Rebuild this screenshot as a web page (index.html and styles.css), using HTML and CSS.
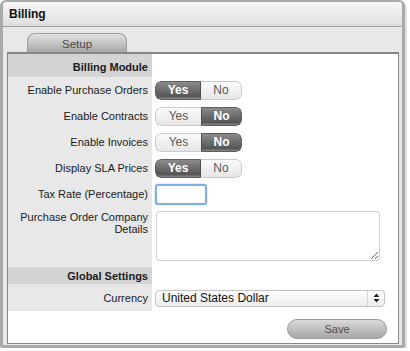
FILE: index.html
```html
<!DOCTYPE html>
<html lang="en">
<head>
  <meta charset="UTF-8">
  <meta name="viewport" content="width=device-width, initial-scale=1.0">
  <title>Billing</title>
  <link rel="stylesheet" href="styles.css">
</head>
<body>
  <div class="window">
    <div class="titlebar">Billing</div>
    <div class="window-body">
      <div class="tabs">
        <div class="tab">Setup</div>
      </div>
      <div class="panel">
        <div class="form">
          <!-- Billing Module -->
          <div class="label head head-first">Billing Module</div>
          <div class="field"></div>

          <div class="label row">Enable Purchase Orders</div>
          <div class="field row">
            <div class="toggle"><span class="yes on">Yes</span><span class="no">No</span></div>
          </div>

          <div class="label row">Enable Contracts</div>
          <div class="field row">
            <div class="toggle"><span class="yes">Yes</span><span class="no on">No</span></div>
          </div>

          <div class="label row">Enable Invoices</div>
          <div class="field row">
            <div class="toggle"><span class="yes">Yes</span><span class="no on">No</span></div>
          </div>

          <div class="label row">Display SLA Prices</div>
          <div class="field row">
            <div class="toggle"><span class="yes on">Yes</span><span class="no">No</span></div>
          </div>

          <div class="label row">Tax Rate (Percentage)</div>
          <div class="field row">
            <input type="text" class="tax focused">
          </div>

          <div class="label row-text">Purchase Order Company Details</div>
          <div class="field row-text">
            <textarea class="details"></textarea>
          </div>

          <!-- Global Settings -->
          <div class="label head">Global Settings</div>
          <div class="field"></div>

          <div class="label row-select">Currency</div>
          <div class="field row-select">
            <div class="select">
              <span class="select-value">United States Dollar</span>
              <span class="select-arrows">
                <svg width="7" height="10" viewBox="0 0 7 10"><path d="M3.5 0.5 L6.5 4 L0.5 4 Z M3.5 9.5 L6.5 6 L0.5 6 Z" fill="#222"/></svg>
              </span>
            </div>
          </div>

          <div class="actions">
            <button class="save">Save</button>
          </div>
        </div>
      </div>
    </div>
  </div>
</body>
</html>
```

FILE: styles.css
```css
/* Estilo global */
body {
  margin: 0;
  padding: 0;
  background-color: #fff;
  font-family: "Liberation Sans", Arial, sans-serif;
  color: #222;
}

.window {
  box-sizing: border-box;
  width: 405px;
  height: 348px;
  border: 3px solid #a9a9a9;
  border-top-width: 2px;
  border-radius: 6px 6px 2px 2px;
  background-color: #e8e8e8;
  box-shadow: 2px 2px 1px rgba(0, 0, 0, 0.12);
  overflow: hidden;
}

.titlebar {
  height: 24px;
  line-height: 25px;
  padding-left: 6px;
  font-size: 12px;
  font-weight: bold;
  color: #111;
  background: linear-gradient(#f7f7f7, #dedede);
  border-bottom: 1px solid #a0a0a0;
}

.window-body {
  padding: 6px 3px 1px 4px;
}

/* Abas */
.tabs {
  display: flex;
  padding-left: 20px;
}

.tab {
  box-sizing: border-box;
  width: 100px;
  height: 19px;
  line-height: 20px;
  text-align: center;
  font-size: 11.5px;
  color: #4a4a4a;
  border: 1px solid #9c9c9c;
  border-bottom: none;
  border-radius: 8px 8px 0 0;
  background: linear-gradient(#e2e2e2, #a8a8a8);
}

.panel {
  border: 1px solid #868686;
  border-top-width: 2px;
  background-color: #fff;
}

/* Formulario */
.form {
  display: grid;
  grid-template-columns: 144px 1fr;
}

.label {
  display: flex;
  align-items: center;
  justify-content: flex-end;
  text-align: right;
  padding-right: 4px;
  font-size: 11px;
  color: #1a1a1a;
  background-color: #e8e8e8;
}

.field {
  display: flex;
  align-items: center;
  padding-left: 3px;
  background-color: #fff;
}

.head {
  height: 17px;
  font-weight: bold;
  background-color: #d4d4d4;
}

.head-first {
  height: 23px;
  padding-top: 3px;
  box-sizing: border-box;
}

.row {
  height: 26px;
}

.row-text {
  height: 60px;
  align-items: flex-start;
}

.label.row-text {
  padding-top: 4px;
  line-height: 12px;
  box-sizing: border-box;
}

.row-select {
  height: 27px;
}

/* Botoes Sim / Nao */
.toggle {
  display: flex;
  height: 19px;
  border-radius: 6px;
  overflow: hidden;
  font-size: 12px;
}

.toggle span {
  box-sizing: border-box;
  display: flex;
  align-items: center;
  justify-content: center;
  color: #5a5a5a;
  background: linear-gradient(#fbfbfb, #e6e6e6);
  border: 1px solid #cacaca;
}

.toggle .yes {
  width: 46px;
  border-radius: 6px 0 0 6px;
  border-right: none;
}

.toggle .no {
  width: 41px;
  border-radius: 0 6px 6px 0;
  border-left: none;
}

.toggle span.on {
  color: #fff;
  font-weight: bold;
  border-color: #5e5e5e;
  background: linear-gradient(#8c8c8c 0%, #6a6a6a 50%, #565656 85%, #8a8a8a 100%);
}

.toggle .yes.on {
  border-right: 1px solid #4d4d4d;
}

.toggle .no.on {
  border-left: 1px solid #4d4d4d;
}

/* Campos */
.tax {
  box-sizing: border-box;
  width: 52px;
  height: 21px;
  margin: 0;
  border: 2px solid #80aee0;
  border-radius: 3px;
  box-shadow: 0 0 2px #a9c8ee;
  outline: none;
}

.details {
  box-sizing: border-box;
  width: 224px;
  height: 50px;
  margin: 4px 0 0 1px;
  border: 1px solid #d0d0d0;
  border-radius: 3px;
  font-family: inherit;
}

.select {
  box-sizing: border-box;
  display: flex;
  width: 230px;
  height: 17px;
  margin-top: 1px;
  border: 1px solid #c4c4c4;
  border-radius: 4px;
  background: linear-gradient(#ffffff, #ececec);
  font-size: 12px;
}

.select-value {
  flex: 1;
  padding-left: 6px;
  line-height: 15px;
  color: #111;
}

.select-arrows {
  width: 16px;
  display: flex;
  align-items: center;
  justify-content: center;
  border-left: 1px solid #d4d4d4;
}

/* Botao salvar */
.actions {
  grid-column: 1 / -1;
  height: 32px;
  display: flex;
  align-items: center;
  justify-content: flex-end;
  padding-right: 11px;
}

.save {
  width: 100px;
  height: 20px;
  margin-top: 3px;
  padding: 0;
  border: 1px solid #9a9a9a;
  border-radius: 10px;
  font-family: inherit;
  font-size: 11px;
  color: #4e4e4e;
  background: linear-gradient(#dadada, #a6a6a6);
}
```
